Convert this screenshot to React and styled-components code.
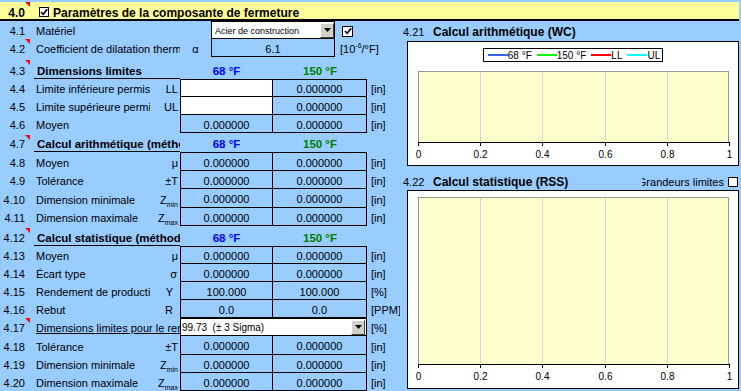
import React from 'react';
import styled, { createGlobalStyle } from 'styled-components';

const GlobalStyle = createGlobalStyle`
  html, body {
    margin: 0;
    padding: 0;
    background: #99ccff;
  }
  body {
    font-family: "Liberation Sans", Arial, sans-serif;
    font-size: 11px;
    color: #000;
  }
  * { box-sizing: border-box; }
`;

const Sheet = styled.div`
  width: 741px;
  height: 391px;
  overflow: hidden;
  background: #99ccff;
  padding-top: 2px;
`;

const TitleBar = styled.div`
  width: 739px;
  height: 19px;
  background: #ffff99;
  border-bottom: 2px solid #000;
  display: flex;
  align-items: flex-end;
  font-weight: bold;
  font-size: 12px;
  line-height: 12px;
`;

const TitleNum = styled.div`
  position: relative;
  width: 30px;
  height: 100%;
  display: flex;
  align-items: flex-end;
  justify-content: flex-end;
  padding-right: 5px;
`;

const Note = styled.span`
  position: absolute;
  top: 0;
  right: 0;
  width: 0;
  height: 0;
  border-top: 5px solid #ff0000;
  border-left: 5px solid transparent;
`;

const Box = styled.span`
  width: ${p => p.$size || 10}px;
  height: ${p => p.$size || 10}px;
  flex: none;
  background: #fff;
  border: 1px solid #000;
  display: flex;
  align-items: center;
  justify-content: center;
  margin: ${p => p.$m || '0'};
`;

const TitleText = styled.span`
  margin-left: 4px;
`;

const Body = styled.div`
  display: flex;
`;

const Left = styled.div`
  width: 400px;
  flex: none;
  display: flex;
  flex-direction: column;
`;

const TopRow = styled.div`
  display: grid;
  grid-template-columns: 30px 150px 31px 124px 65px;
  height: ${p => p.$h}px;
`;

const Row = styled.div`
  display: grid;
  grid-template-columns: 30px 120px 30px 93px 94px 33px;
  height: ${p => p.$h}px;
  margin-top: ${p => p.$mt || 0}px;
`;

const Cell = styled.div`
  display: flex;
  align-items: center;
  padding-top: 2px;
  min-width: 0;
  overflow: hidden;
  white-space: nowrap;
`;

const Num = styled(Cell)`
  position: relative;
  justify-content: flex-end;
  padding-right: 5px;
  overflow: visible;
  ${p => p.$end && `
    align-items: flex-end;
    padding-top: 0;
    padding-bottom: 1px;
    line-height: 14px;
  `}
`;

const Label = styled(Cell)`
  padding-left: 6px;
  grid-column: span ${p => p.$span || 1};
  text-decoration: ${p => (p.$u ? 'underline' : 'none')};
`;

const SecLabel = styled.div`
  grid-column: span 2;
  margin-left: 4px;
  padding-left: 3px;
  border-bottom: 1px solid #000;
  display: flex;
  align-items: flex-end;
  font-weight: bold;
  font-size: 11.5px;
  line-height: 14px;
  white-space: nowrap;
  overflow: hidden;
`;

const Temp = styled.div`
  display: flex;
  align-items: flex-end;
  justify-content: center;
  padding-bottom: 1px;
  font-weight: bold;
  font-size: 11.5px;
  line-height: 14px;
  color: ${p => p.$color};
`;

const Sym = styled(Cell)`
  justify-content: ${p => (p.$center ? 'center' : 'flex-end')};
  padding-right: ${p => (p.$pr ?? 2)}px;
`;

const Value = styled(Cell)`
  justify-content: center;
  background: ${p => (p.$white ? '#fff' : 'transparent')};
  border-right: 1px solid #000;
  border-bottom: 1px solid #000;
  border-left: ${p => (p.$lead ? '1px solid #000' : 'none')};
  border-top: ${p => (p.$top ? '1px solid #000' : 'none')};
`;

const Unit = styled(Cell)`
  padding-left: ${p => p.$pl ?? 4}px;
`;

const Sup = styled.span`
  font-size: 7px;
  position: relative;
  top: -4px;
`;

const Sub = styled.span`
  font-size: 7px;
  position: relative;
  top: 3px;
`;

const Select = styled.div`
  grid-column: span ${p => p.$span || 1};
  display: flex;
  align-items: center;
  background: #fff;
  border: 1px solid #000;
  padding-left: ${p => p.$pl || 3}px;
  font-size: ${p => p.$fs || 10}px;
  white-space: nowrap;
  overflow: hidden;
`;

const SelectText = styled.span`
  flex: 1;
  padding-top: 1px;
`;

const DropButton = styled.span`
  width: 14px;
  height: 15px;
  flex: none;
  background: #d4d0c8;
  border: 1px solid;
  border-color: #fff #404040 #404040 #fff;
  display: flex;
  align-items: center;
  justify-content: center;
  margin-right: ${p => p.$mr || 0}px;
`;

const InputBox = styled(Cell)`
  justify-content: center;
  border: 1px solid #000;
  border-top: none;
`;

const Right = styled.div`
  flex: 1;
  display: flex;
  flex-direction: column;
`;

const ChartHead = styled.div`
  height: ${p => p.$h}px;
  display: flex;
  align-items: center;
  padding: ${p => p.$pt || 2}px 3px 0 3px;
  white-space: nowrap;
`;

const ChartNum = styled.span`
  width: 30px;
  flex: none;
`;

const ChartTitle = styled.span`
  font-weight: bold;
  font-size: 12px;
  flex: 1;
`;

const LimitsClip = styled.span`
  width: 82px;
  flex: none;
  display: flex;
  justify-content: flex-end;
  overflow: hidden;
  margin-right: 4px;
`;

const ChartFrame = styled.div`
  width: 332px;
  height: ${p => p.$h}px;
  margin-left: 7px;
  background: #fff;
  border: 1px solid #000;
  display: flex;
  flex-direction: column;
  align-items: center;
`;

const Legend = styled.div`
  margin-top: 6px;
  height: 14px;
  border: 1px solid #000;
  display: flex;
  align-items: center;
  gap: 5px;
  padding: 0 2px 0 4px;
  font-size: 10px;
`;

const LegendItem = styled.span`
  display: flex;
  align-items: center;
`;

const LegendLine = styled.span`
  width: 20px;
  height: 2px;
  background: ${p => p.$color};
`;

const PlotSvg = styled.svg`
  display: block;
  flex: none;
  align-self: flex-start;
`;

const CheckMark = () => (
  <svg width="8" height="8" viewBox="0 0 8 8">
    <path d="M1 4 L3.2 6.3 L7.2 1.2" fill="none" stroke="#000" strokeWidth="1.7" />
  </svg>
);

const Arrow = () => (
  <svg width="7" height="4" viewBox="0 0 7 4">
    <polygon points="0,0 7,0 3.5,4" fill="#000" />
  </svg>
);

const Z = ({ sub }) => (
  <span>Z<Sub>{sub}</Sub></span>
);

const ticks = [0, 0.2, 0.4, 0.6, 0.8, 1];

const Plot = ({ height, top, axis }) => {
  const x = t => Math.round(10 + 311 * t);
  return (
    <PlotSvg width="330" height={height}>
      <rect x="10.5" y={top + 0.5} width="310" height={axis - top} fill="#ffffcc" stroke="#999" />
      {ticks.slice(1, 5).map(t => (
        <line key={t} x1={x(t) + 0.5} x2={x(t) + 0.5} y1={top + 1} y2={axis} stroke="#d6d6d6" />
      ))}
      <line x1="10" x2="322" y1={axis + 0.5} y2={axis + 0.5} stroke="#000" />
      {ticks.map(t => (
        <g key={t}>
          <line x1={x(t) + 0.5} x2={x(t) + 0.5} y1={axis} y2={axis + 4} stroke="#000" />
          <text x={x(t) + 0.5} y={axis + 16} textAnchor="middle" fontSize="10" fontFamily="Liberation Sans, Arial, sans-serif">
            {t}
          </text>
        </g>
      ))}
    </PlotSvg>
  );
};

const legend = [
  { label: '68 °F', color: '#3366ff' },
  { label: '150 °F', color: '#00ff00' },
  { label: 'LL', color: '#ff0000' },
  { label: 'UL', color: '#00ffff' },
];

const limitRows = [
  { n: '4.4', label: 'Limite inférieure permise', sym: 'LL', a: null, b: '0.000000', h: 18 },
  { n: '4.5', label: 'Limite supérieure permise', sym: 'UL', a: null, b: '0.000000', h: 18 },
  { n: '4.6', label: 'Moyen', sym: '', a: '0.000000', b: '0.000000', h: 18 },
];

const arithRows = [
  { n: '4.8', label: 'Moyen', sym: 'μ', h: 19 },
  { n: '4.9', label: 'Tolérance', sym: '±T', h: 18 },
  { n: '4.10', label: 'Dimension minimale', sym: <Z sub="min" />, h: 19 },
  { n: '4.11', label: 'Dimension maximale', sym: <Z sub="max" />, h: 18 },
];

const statRows = [
  { n: '4.13', label: 'Moyen', sym: 'μ', h: 18 },
  { n: '4.14', label: 'Écart type', sym: 'σ', h: 18, pr: 3 },
  { n: '4.15', label: 'Rendement de production', sym: 'Y', a: '100.000', b: '100.000', unit: '[%]', h: 18, pr: 7 },
  { n: '4.16', label: 'Rebut', sym: 'R', a: '0.0', b: '0.0', unit: '[PPM]', h: 18, pr: 7 },
];

const finalRows = [
  { n: '4.18', label: 'Tolérance', sym: '±T', h: 19 },
  { n: '4.19', label: 'Dimension minimale', sym: <Z sub="min" />, h: 18 },
  { n: '4.20', label: 'Dimension maximale', sym: <Z sub="max" />, h: 18 },
];

const DataRow = ({ r, top }) => (
  <Row $h={r.h}>
    <Num>{r.n}</Num>
    <Label>{r.label}</Label>
    <Sym $pr={r.pr}>{r.sym}</Sym>
    <Value $lead $top={top} $white={r.a === null}>
      {r.a === undefined ? '0.000000' : r.a}
    </Value>
    <Value $top={top}>{r.b || '0.000000'}</Value>
    <Unit>{r.unit || '[in]'}</Unit>
  </Row>
);

const Section = ({ n, title, h, mt }) => (
  <Row $h={h} $mt={mt}>
    <Num $end>
      {n}
      <Note />
    </Num>
    <SecLabel>{title}</SecLabel>
    <Temp $color="#0000ff">68 °F</Temp>
    <Temp $color="#008000">150 °F</Temp>
  </Row>
);

export default function App() {
  return (
    <>
      <GlobalStyle />
      <Sheet>
        <TitleBar>
          <TitleNum>
            4.0
            <Note />
          </TitleNum>
          <Box $m="0 0 2px 9px"><CheckMark /></Box>
          <TitleText>Paramètres de la composante de fermeture</TitleText>
        </TitleBar>
        <Body>
          <Left>
            <TopRow $h={18}>
              <Num>4.1</Num>
              <Label>Matériel</Label>
              <Cell />
              <Select $fs={9}>
                <SelectText>Acier de construction</SelectText>
                <DropButton><Arrow /></DropButton>
              </Select>
              <Unit $pl={7}>
                <Box $size={11}><CheckMark /></Box>
              </Unit>
            </TopRow>
            <TopRow $h={18}>
              <Num>
                4.2
                <Note />
              </Num>
              <Label>Coefficient de dilatation thermique</Label>
              <Sym $center $pr={0}>α</Sym>
              <InputBox>6.1</InputBox>
              <Unit $pl={5}>
                [10<Sup>-6</Sup>/°F]
              </Unit>
            </TopRow>

            <Section n="4.3" title="Dimensions limites" h={19} mt={3} />
            {limitRows.map((r, i) => (
              <DataRow key={r.n} r={r} top={i === 0} />
            ))}

            <Section n="4.7" title="Calcul arithmétique (méthode WC)" h={17} mt={2} />
            {arithRows.map((r, i) => (
              <DataRow key={r.n} r={r} top={i === 0} />
            ))}

            <Section n="4.12" title="Calcul statistique (méthode RSS)" h={18} mt={2} />
            {statRows.map((r, i) => (
              <DataRow key={r.n} r={r} top={i === 0} />
            ))}
            <Row $h={18}>
              <Num>
                4.17
                <Note />
              </Num>
              <Label $span={2} $u>Dimensions limites pour le rendement</Label>
              <Select $span={2} $pl={1}>
                <SelectText>99.73&nbsp; (± 3 Sigma)</SelectText>
                <DropButton $mr={1}><Arrow /></DropButton>
              </Select>
              <Unit>[%]</Unit>
            </Row>
            {finalRows.map(r => (
              <DataRow key={r.n} r={r} />
            ))}
          </Left>

          <Right>
            <ChartHead $h={20}>
              <ChartNum>4.21</ChartNum>
              <ChartTitle>Calcul arithmétique (WC)</ChartTitle>
            </ChartHead>
            <ChartFrame $h={125}>
              <Legend>
                {legend.map(l => (
                  <LegendItem key={l.label}>
                    <LegendLine $color={l.color} />
                    {l.label}
                  </LegendItem>
                ))}
              </Legend>
              <Plot height={103} top={9} axis={80} />
            </ChartFrame>
            <ChartHead $h={24} $pt={7}>
              <ChartNum>4.22</ChartNum>
              <ChartTitle>Calcul statistique (RSS)</ChartTitle>
              <LimitsClip>
                <span>Grandeurs limites</span>
              </LimitsClip>
              <Box />
            </ChartHead>
            <ChartFrame $h={199}>
              <Plot height={197} top={6} axis={173} />
            </ChartFrame>
          </Right>
        </Body>
      </Sheet>
    </>
  );
}
